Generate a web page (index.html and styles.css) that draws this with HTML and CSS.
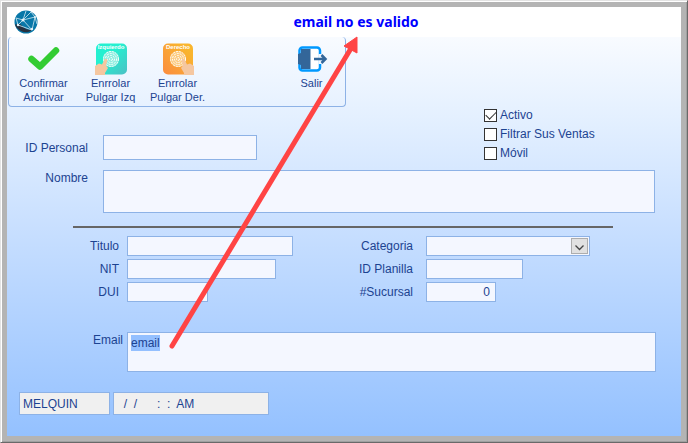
FILE: index.html
```html
<!DOCTYPE html>
<html lang="es">
  <head>
    <meta charset="UTF-8">
    <meta name="viewport" content="width=device-width, initial-scale=1.0">
    <title>Personal</title>
    <link rel="stylesheet" href="styles.css">
  </head>
  <body>
    <div class="window">
      <header class="titlebar">
        <svg class="logo" width="24" height="24" viewBox="0 0 24 24">
          <circle cx="12" cy="12" r="11.5" fill="#0877a8"/>
          <path d="M1 14.500L6 14L12 19L18 20.500A11.500 11.500 0 0 1 1 14.500Z" fill="#26303f"/>
          <path d="M2 8L9 10L17 2M9 10L21 7L18 20L9 10L4 15L2 8M4 15L18 20M9 10L12 1M21 7L23 14M17 2L21 7" fill="none" stroke="#a9d3e4" stroke-width="1"/>
          <g fill="#e4f3f8">
            <circle cx="9" cy="10" r="1.500"/>
            <circle cx="21" cy="7" r="1"/>
            <circle cx="18" cy="19" r="1.200"/>
            <circle cx="4" cy="15" r="1.200"/>
          </g>
        </svg>
        <h1>email no es valido</h1>
      </header>

      <form class="content">
        <div class="toolbar">
          <button type="button">
            <svg width="32" height="32" viewBox="0 0 32 32">
              <path d="M3.500 16L12 23.500L28 7.500" fill="none" stroke="#33cc33" stroke-width="6.500" stroke-linejoin="round" stroke-linecap="round"/>
            </svg>
            Confirmar<br>Archivar
          </button>
          <button type="button">
            <svg width="32" height="32" viewBox="0 0 32 32">
              <defs>
                <linearGradient id="teal" x1="0" y1="0" x2="1" y2="1">
                  <stop offset="0.400" stop-color="#24f0d0"/>
                  <stop offset="1" stop-color="#4cc0c4"/>
                </linearGradient>
              </defs>
              <rect x="1" y="0.500" width="31" height="31" rx="5" fill="url(#teal)"/>
              <text x="16" y="6" class="tiny">Izquierdo</text>
              <circle cx="16" cy="16" r="8" fill="#8eeee0"/>
              <g class="print">
                <circle cx="16" cy="16" r="7.500"/>
                <circle cx="16" cy="16" r="5.500"/>
                <circle cx="16" cy="16" r="3.500"/>
                <circle cx="16" cy="16" r="1.500"/>
              </g>
              <path d="M0 32V23L4 20.500L7 21.500L9.500 16.500Q11 15 12.500 17L11 22.500L13 25L10 30V32Z" fill="#f5c7a0"/>
            </svg>
            Enrrolar<br>Pulgar Izq
          </button>
          <button type="button">
            <svg width="32" height="32" viewBox="0 0 32 32">
              <defs>
                <linearGradient id="orange" x1="1" y1="0" x2="0" y2="1">
                  <stop offset="0.200" stop-color="#f9b52e"/>
                  <stop offset="1" stop-color="#fb8c40"/>
                </linearGradient>
              </defs>
              <rect x="1" y="0.500" width="30" height="31" rx="5" fill="url(#orange)"/>
              <text x="16" y="6" class="tiny">Derecho</text>
              <circle cx="16" cy="16" r="8" fill="#fccb80"/>
              <g class="print">
                <circle cx="16" cy="16" r="7.500"/>
                <circle cx="16" cy="16" r="5.500"/>
                <circle cx="16" cy="16" r="3.500"/>
                <circle cx="16" cy="16" r="1.500"/>
              </g>
              <path d="M32 32V23L28 20.500L25 21.500L22.500 16.500Q21 15 19.500 17L21 22.500L19 25L22 30V32Z" fill="#f5c7a0"/>
            </svg>
            Enrrolar<br>Pulgar Der.
          </button>
          <button type="button" class="exit">
            <svg width="32" height="32" viewBox="0 0 32 32">
              <rect x="3.500" y="4.500" width="20.500" height="23" rx="3" fill="#fff" stroke="#0099ff" stroke-width="2.500"/>
              <path d="M5 6H14.500V26H5V22L2 21V11L5 10Z" fill="#336699"/>
              <path d="M24 11V21" stroke="#f3f8ff" stroke-width="3"/>
              <path d="M18 16H29M25.500 12L29.500 16L25.500 20" fill="none" stroke="#336699" stroke-width="2.500"/>
            </svg>
            Salir
          </button>
        </div>

        <div class="top">
          <div class="field main">
            <label for="id-personal">ID Personal</label>
            <input type="text" id="id-personal">
          </div>
          <div class="checks">
            <label><input type="checkbox" checked>Activo</label>
            <label><input type="checkbox">Filtrar Sus Ventas</label>
            <label><input type="checkbox">Móvil</label>
          </div>
        </div>

        <div class="field main name">
          <label for="nombre">Nombre</label>
          <textarea id="nombre"></textarea>
        </div>

        <hr>

        <div class="details">
          <div class="column left">
            <div class="field">
              <label for="titulo">Titulo</label>
              <input type="text" id="titulo">
            </div>
            <div class="field">
              <label for="nit">NIT</label>
              <input type="text" id="nit">
            </div>
            <div class="field">
              <label for="dui">DUI</label>
              <input type="text" id="dui">
            </div>
          </div>
          <div class="column right">
            <div class="field">
              <label for="categoria">Categoria</label>
              <div class="select">
                <select id="categoria"><option></option></select>
                <svg width="17" height="16" viewBox="0 0 17 16">
                  <rect x="0.500" y="0.500" width="16" height="15" fill="#e1e1e1" stroke="#adadad"/>
                  <path d="M4.500 7.500L8.500 11.500L12.500 7.500" fill="none" stroke="#444" stroke-width="1.300"/>
                </svg>
              </div>
            </div>
            <div class="field">
              <label for="planilla">ID Planilla</label>
              <input type="text" id="planilla">
            </div>
            <div class="field">
              <label for="sucursal">#Sucursal</label>
              <input type="text" id="sucursal" value="0">
            </div>
          </div>
        </div>

        <div class="field email">
          <label for="email">Email</label>
          <textarea id="email" spellcheck="false">email</textarea>
        </div>

        <div class="status">
          <input type="text" class="user" aria-label="Usuario" value="MELQUIN" readonly>
          <input type="text" class="stamp" aria-label="Fecha y hora" value="  /  /      :  :  AM" readonly>
        </div>
      </form>

      <svg class="arrow" width="200" height="320" viewBox="0 0 200 320">
        <path d="M11 315L189 19" stroke="#ff4444" stroke-width="5" stroke-linecap="round"/>
        <path d="M196 6L183 15L196 22Z" fill="#ff4444" stroke="#ff4444"/>
      </svg>
    </div>

    <script>
      const email = document.querySelector("#email");
      email.focus();
      email.select();
    </script>
  </body>
</html>
```

FILE: styles.css
```css
:root {
  --ink: #1c4391;
  --line: #8db2e6;
  --field: #f4f7ff;
}

* {
  box-sizing: border-box;
  margin: 0;
  padding: 0;
}

body {
  background: #b4b4b4;
  color: var(--ink);
  font: 12px/16px "Liberation Sans", Arial, sans-serif;
}

.window {
  position: relative;
  display: flex;
  flex-direction: column;
  min-height: 100vh;
  padding: 6px;
  border: 1px solid;
  border-color: #e3e3e3 #696969 #696969 #e3e3e3;
  box-shadow: inset 1px 1px #fff, inset -1px -1px #a0a0a0;
}

.titlebar {
  display: flex;
  align-items: center;
  height: 30px;
  padding: 0 7px;
  background: #fff;
}

h1 {
  flex: 1;
  color: #00f;
  font: bold 14px/20px "Noto Sans", sans-serif;
  text-align: center;
}

.content {
  flex: 1;
  background: linear-gradient(#f8fbff, #e4f0ff 20%, #c8dfff 48%, #94c1ff);
}

.toolbar {
  display: flex;
  align-items: flex-start;
  width: 338px;
  height: 70px;
  margin-left: 1px;
  padding: 6px 0 0 1px;
  border: 1px solid var(--line);
  border-top: 0;
  border-radius: 4px;
}

.toolbar button {
  width: 67px;
  background: none;
  border: 0;
  color: var(--ink);
  font: 11px/14px "Liberation Sans", Arial, sans-serif;
}

.toolbar svg {
  display: block;
  margin: 0 auto 1px;
}

.toolbar .exit {
  margin-left: auto;
}

.tiny {
  fill: #fff;
  font-size: 6px;
  font-weight: bold;
  text-anchor: middle;
}

.print {
  fill: none;
  stroke: #fff;
  stroke-dasharray: 2 1;
}

.top {
  display: flex;
  justify-content: space-between;
  align-items: flex-end;
  margin-top: 2px;
}

.checks {
  display: flex;
  flex-direction: column;
  gap: 6px;
  width: 197px;
}

.checks label {
  display: flex;
  align-items: center;
  gap: 3px;
  line-height: 13px;
}

.checks input {
  appearance: none;
  width: 13px;
  height: 13px;
  border: 1px solid #333;
  background: #fff;
}

.checks input:checked::after {
  content: "";
  display: block;
  width: 9px;
  height: 5px;
  margin: 1px;
  border: solid #333;
  border-width: 0 0 1px 1px;
  transform: rotate(-45deg);
}

.field {
  display: flex;
  align-items: center;
}

.field label {
  text-align: right;
}

.field input,
.field textarea,
.field select {
  display: block;
  height: 20px;
  padding: 2px;
  border: 1px solid var(--line);
  border-radius: 0;
  outline: 0;
  background: var(--field);
  color: var(--ink);
  font: inherit;
  resize: none;
}

.main label {
  width: 81px;
  margin-right: 15px;
}

#id-personal {
  width: 154px;
  height: 25px;
}

.name,
.email {
  align-items: flex-start;
  margin: 10px 26px 0 0;
}

.field textarea {
  flex: 1;
  height: 43px;
}

hr {
  height: 2px;
  margin: 13px 68px 8px 66px;
  border: 0;
  background: #666;
}

.details {
  display: flex;
}

.column {
  display: flex;
  flex: 1;
  flex-direction: column;
  gap: 3px;
}

.left label {
  width: 112px;
  margin-right: 8px;
}

.right label {
  width: 69px;
  margin-right: 13px;
}

#titulo { width: 166px; }
#nit { width: 149px; }
#dui { width: 81px; }
#planilla { width: 97px; }

#sucursal {
  width: 70px;
  padding-right: 5px;
  text-align: right;
}

.select {
  position: relative;
  width: 164px;
}

.select select {
  appearance: none;
  width: 100%;
}

.select svg {
  position: absolute;
  top: 2px;
  right: 2px;
  pointer-events: none;
}

.email {
  margin: 30px 25px 0 0;
}

.email label {
  width: 116px;
  margin-right: 4px;
}

.field #email {
  height: 40px;
  padding: 2px 3px;
}

#email::selection {
  background: #94c0ff;
  color: var(--ink);
}

.status {
  display: flex;
  gap: 3px;
  padding: 20px 12px;
}

.status input {
  height: 23px;
  padding: 0 3px;
  border: 1px solid var(--line);
  background: #f0f0f0;
  color: var(--ink);
  font: inherit;
}

.status .user {
  width: 91px;
}

.status .stamp {
  width: 156px;
}

.arrow {
  position: absolute;
  top: 30px;
  left: 160px;
  pointer-events: none;
}
```
